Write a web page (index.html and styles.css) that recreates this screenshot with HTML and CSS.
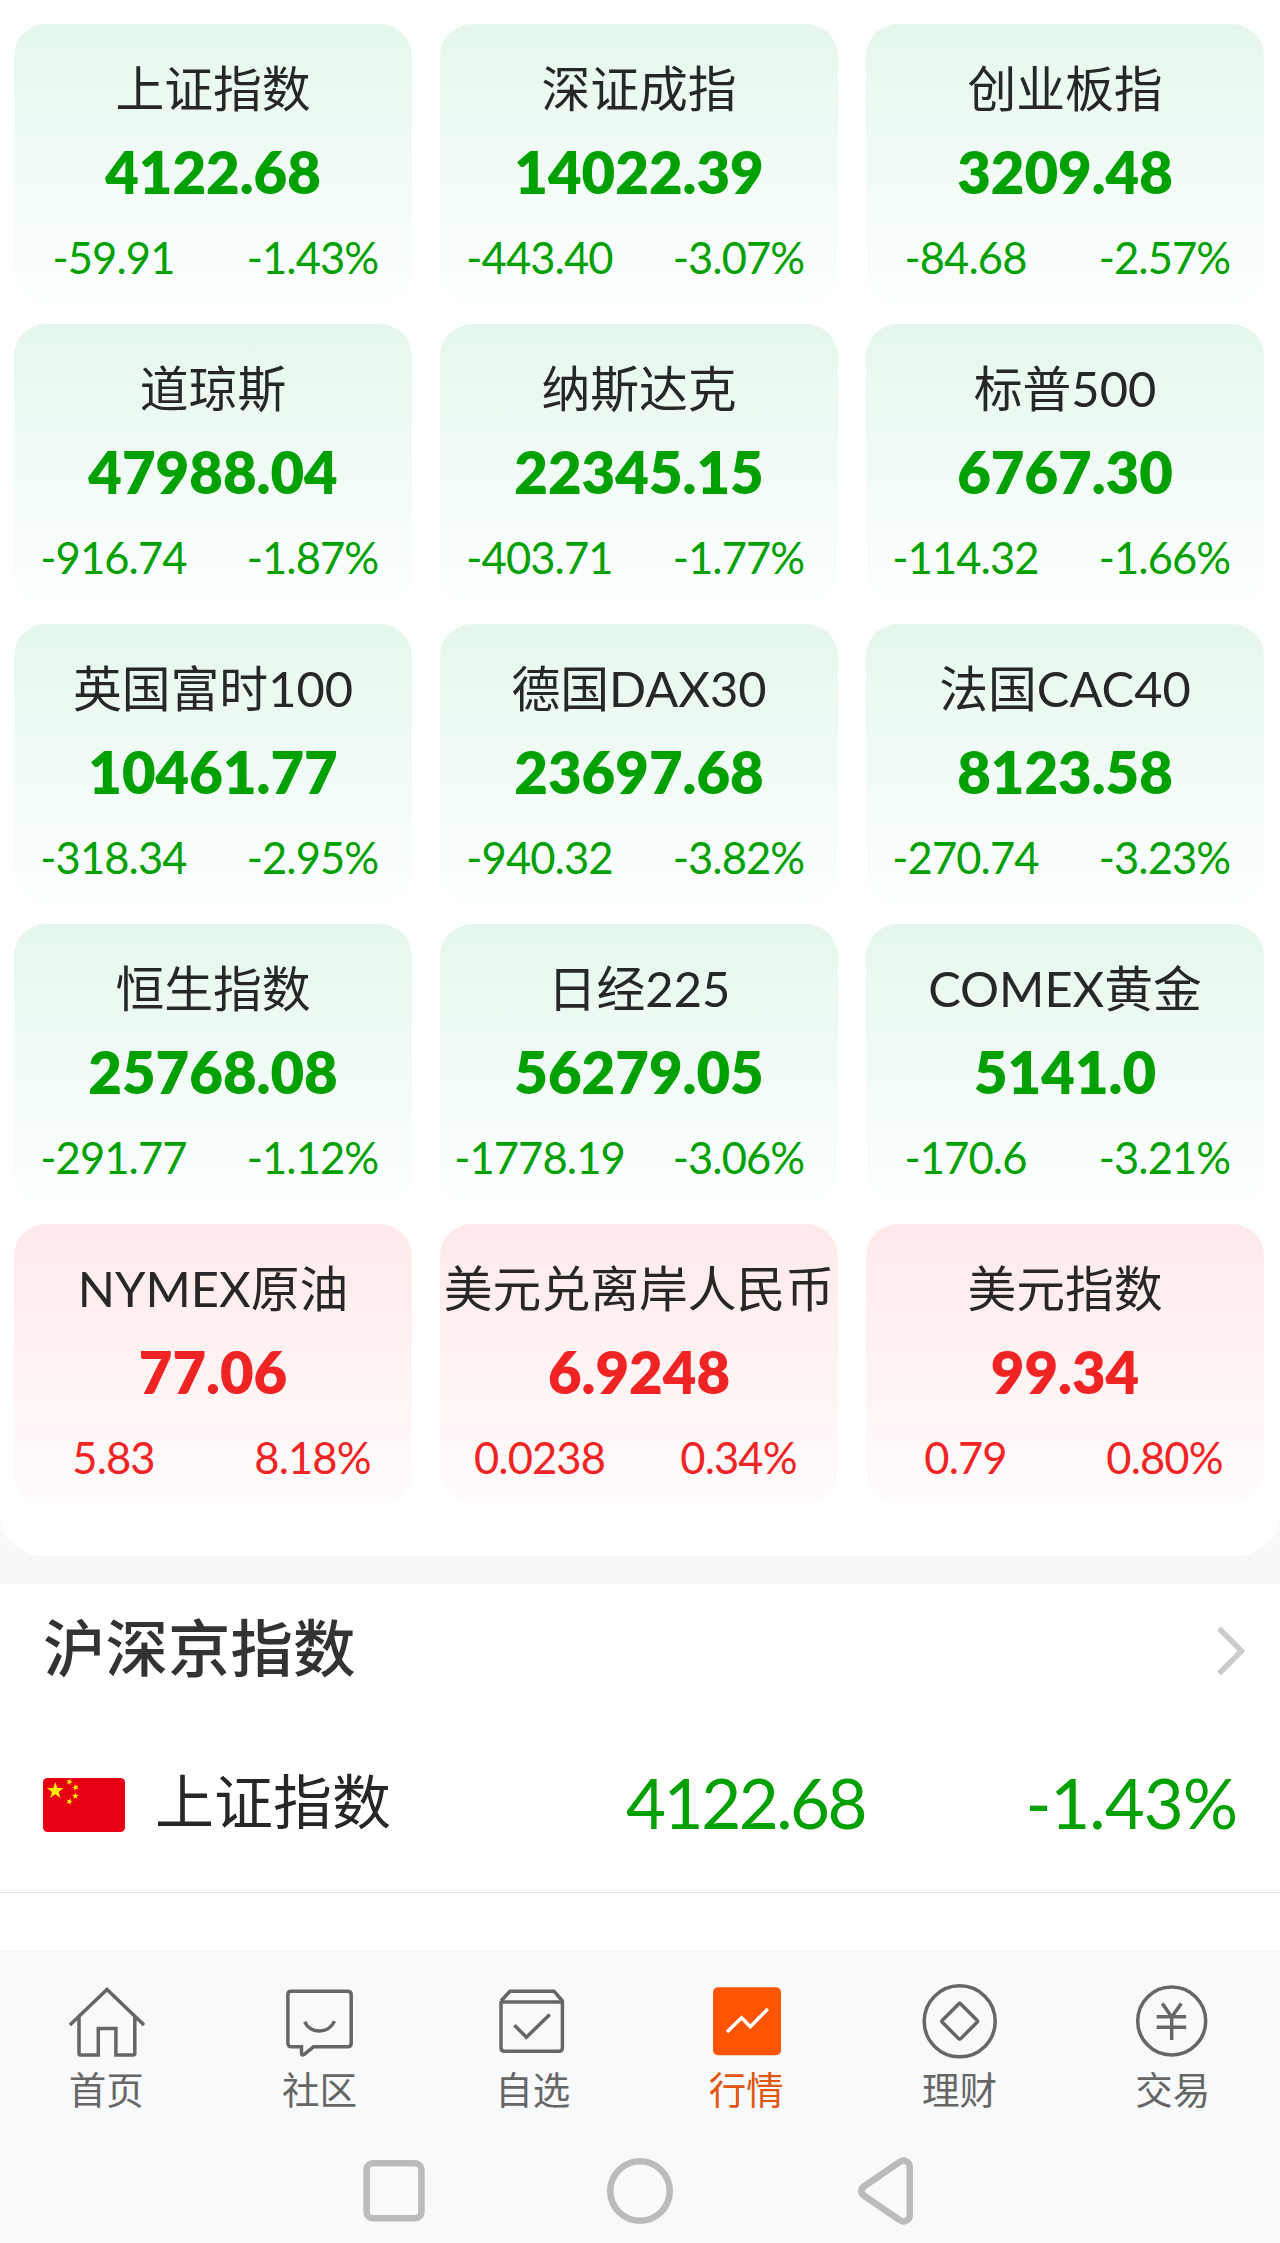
FILE: index.html
```html
<!DOCTYPE html>
<html lang="zh-CN">
<head>
<meta charset="utf-8">
<title>行情</title>
<link rel="stylesheet" href="styles.css">
</head>
<body>
<main class="panel">
  <div class="card"><h3>上证指数</h3><strong>4122.68</strong><p><span>-59.91</span><span>-1.43%</span></p></div>
  <div class="card"><h3>深证成指</h3><strong>14022.39</strong><p><span>-443.40</span><span>-3.07%</span></p></div>
  <div class="card"><h3>创业板指</h3><strong>3209.48</strong><p><span>-84.68</span><span>-2.57%</span></p></div>
  <div class="card"><h3>道琼斯</h3><strong>47988.04</strong><p><span>-916.74</span><span>-1.87%</span></p></div>
  <div class="card"><h3>纳斯达克</h3><strong>22345.15</strong><p><span>-403.71</span><span>-1.77%</span></p></div>
  <div class="card"><h3>标普500</h3><strong>6767.30</strong><p><span>-114.32</span><span>-1.66%</span></p></div>
  <div class="card"><h3>英国富时100</h3><strong>10461.77</strong><p><span>-318.34</span><span>-2.95%</span></p></div>
  <div class="card"><h3>德国DAX30</h3><strong>23697.68</strong><p><span>-940.32</span><span>-3.82%</span></p></div>
  <div class="card"><h3>法国CAC40</h3><strong>8123.58</strong><p><span>-270.74</span><span>-3.23%</span></p></div>
  <div class="card"><h3>恒生指数</h3><strong>25768.08</strong><p><span>-291.77</span><span>-1.12%</span></p></div>
  <div class="card"><h3>日经225</h3><strong>56279.05</strong><p><span>-1778.19</span><span>-3.06%</span></p></div>
  <div class="card"><h3>COMEX黄金</h3><strong>5141.0</strong><p><span>-170.6</span><span>-3.21%</span></p></div>
  <div class="card up"><h3>NYMEX原油</h3><strong>77.06</strong><p><span>5.83</span><span>8.18%</span></p></div>
  <div class="card up"><h3>美元兑离岸人民币</h3><strong>6.9248</strong><p><span>0.0238</span><span>0.34%</span></p></div>
  <div class="card up"><h3>美元指数</h3><strong>99.34</strong><p><span>0.79</span><span>0.80%</span></p></div>
</main>
<section class="list">
  <header class="list-head">
    <h2>沪深京指数</h2>
    <svg class="chevron" viewBox="0 0 30 50"><path d="M3 2.5 25.5 25 3 47.5" fill="none" stroke="#ccc" stroke-width="5.5"/></svg>
  </header>
  <div class="row">
    <svg class="flag" viewBox="0 0 82 54">
      <defs><path id="star" d="M0-10 2.35-3.24 9.51-3.09 3.8 1.24 5.88 8.09 0 4-5.88 8.09-3.8 1.24-9.51-3.09-2.35-3.24Z"/></defs>
      <rect width="82" height="54" rx="4.5" fill="#e60012"/>
      <g fill="#fff000">
        <use href="#star" transform="translate(12.3 12.8) scale(.88)"/>
        <use href="#star" transform="translate(26.4 3.9) rotate(20) scale(.35)"/>
        <use href="#star" transform="translate(32.7 9.4) rotate(-15) scale(.35)"/>
        <use href="#star" transform="translate(32.3 18) scale(.35)"/>
        <use href="#star" transform="translate(26.4 23.6) rotate(20) scale(.35)"/>
      </g>
    </svg>
    <span class="name">上证指数</span>
    <span class="price">4122.68</span>
    <span class="rate">-1.43%</span>
  </div>
</section>
<footer class="bottom">
  <nav class="tabs">
    <a class="tab">
      <svg viewBox="0 0 80 80"><path d="M2.9 44.9 40 9.4 77 44.9M12 37.5V73.5Q12 75 13.5 75H31.3V48.4H48.9V75H66Q67.8 75 67.8 73.5V37.5"/></svg>
      <span>首页</span>
    </a>
    <a class="tab">
      <svg viewBox="0 0 80 80"><path d="M11 11.2H67.5Q71.2 11.2 71.2 14.5V63.2Q71.2 66.8 67.5 66.8H33.5L24 74.5Q21.5 76 21.5 73.5V66.8H11.5Q7.9 66.8 7.9 63.2V14.5Q7.9 11.2 11 11.2ZM24.7 41.8C30 54 49 54.5 54.4 41.2"/></svg>
      <span>社区</span>
    </a>
    <a class="tab">
      <svg viewBox="0 0 80 80"><path d="M8 21 16.9 11.2H61L69.4 21V68Q69.4 71.2 66 71.2H11.5Q8 71.2 8 68V21M8 22.1H69.4M21.5 45.2 33.4 57.2 56.8 34.5"/></svg>
      <span>自选</span>
    </a>
    <a class="tab active">
      <svg viewBox="0 0 80 80"><rect class="tile" x="6" y="7.3" width="68" height="68" rx="5"/><path d="M20 52 34.6 37.8 43.3 46.7 60.8 29"/></svg>
      <span>行情</span>
    </a>
    <a class="tab">
      <svg viewBox="0 0 80 80"><circle cx="39.7" cy="41.3" r="35.5"/><rect x="26.7" y="28.3" width="26" height="26" rx="1.5" transform="rotate(45 39.7 41.3)"/></svg>
      <span>理财</span>
    </a>
    <a class="tab">
      <svg viewBox="0 0 80 80"><circle cx="38.7" cy="41" r="34"/><path d="M29.3 23.6 38.7 37 48.3 23.6M38.7 36V60M23.7 36.7H53.2M23.7 47.3H53.2"/></svg>
      <span>交易</span>
    </a>
  </nav>
  <div class="system">
    <svg viewBox="0 0 80 80"><rect x="12.6" y="12.3" width="54.8" height="55" rx="6.5"/></svg>
    <svg viewBox="0 0 80 80"><circle cx="40" cy="40" r="29.7"/></svg>
    <svg viewBox="0 0 80 80"><path d="M54 10.8 18.5 35C14.2 38 14.2 42 18.5 45L54 69.2C58 71.8 63.7 69.5 63.7 64V16C63.7 10.5 58 8.2 54 10.8Z"/></svg>
  </div>
</footer>
</body>
</html>
```
FILE: styles.css
```css
* { box-sizing: border-box; }
body {
  margin: 0;
  width: 1280px;
  height: 2243px;
  display: flex;
  flex-direction: column;
  background: #f6f8fa;
  color: #272727;
  font-family: Lato, "Noto Sans CJK SC", sans-serif;
}
h2, h3, p { margin: 0; }
.panel {
  height: 1556px;
  padding: 24px 16px 0 14px;
  display: grid;
  grid-template-columns: repeat(3, 398px);
  grid-auto-rows: 280px;
  gap: 20px 28px;
  align-content: start;
  background: #fff;
  border-radius: 0 0 44px 44px;
}
.card {
  display: flex;
  flex-direction: column;
  align-items: center;
  padding-top: 32px;
  border-radius: 32px;
  background: linear-gradient(#e5f7ed, #fcfffe);
  color: #00a000;
  white-space: nowrap;
}
.card.up {
  background: linear-gradient(#ffe9ea, #fffcfc);
  color: #f02424;
}
.card h3 {
  height: 64px;
  line-height: 64px;
  font-size: 48.8px;
  font-weight: 400;
  color: #272727;
}
.card strong {
  height: 84px;
  line-height: 104px;
  font-size: 58px;
  font-weight: 800;
}
.card p {
  width: 100%;
  display: grid;
  grid-template-columns: 1fr 1fr;
  text-align: center;
  font-size: 43.5px;
  line-height: 106px;
  height: 90px;
  letter-spacing: -0.9px;
}
.list {
  height: 365px;
  margin-top: 28px;
  background: #fff;
}
.list-head {
  height: 133px;
  padding: 0 34px 0 43px;
  display: flex;
  align-items: center;
  justify-content: space-between;
}
.list-head h2 {
  height: 133px;
  font-size: 62.5px;
  font-weight: 500;
  line-height: 127px;
  color: #333;
}
.chevron { width: 30px; height: 50px; }
.row {
  height: 176px;
  padding: 0 43px;
  display: grid;
  grid-template-columns: 82px 430px 312px 1fr;
  align-items: center;
  border-bottom: 1px solid #e3e3e3;
  line-height: 170px;
}
.row span { height: 176px; }
.flag { width: 82px; height: 54px; }
.name { padding-left: 30px; font-size: 59px; }
.price, .rate {
  text-align: right;
  font-size: 69px;
  line-height: 172px;
  color: #00a000;
  letter-spacing: -1px;
}
.price { letter-spacing: -2.5px; padding-right: 2px; }
.bottom { height: 294px; background: #f8f9fb; }
.tabs {
  height: 200px;
  padding-top: 31px;
  display: grid;
  grid-template-columns: repeat(6, 1fr);
}
.tab {
  display: flex;
  flex-direction: column;
  align-items: center;
  color: #666;
}
.tab svg {
  width: 80px;
  height: 80px;
  fill: none;
  stroke: #666;
  stroke-width: 3.5;
}
.tab span { font-size: 37.5px; line-height: 60px; padding-right: 1px; }
.tab.active { color: #e0560f; }
.tab.active svg { stroke: #fff; }
.tab.active .tile { fill: #ff5500; stroke: none; }
.system {
  display: flex;
  justify-content: center;
  gap: 166px;
  padding-top: 2px;
}
.system svg {
  width: 80px;
  height: 80px;
  fill: #fafafa;
  stroke: #bbb;
  stroke-width: 6.6;
}
```
